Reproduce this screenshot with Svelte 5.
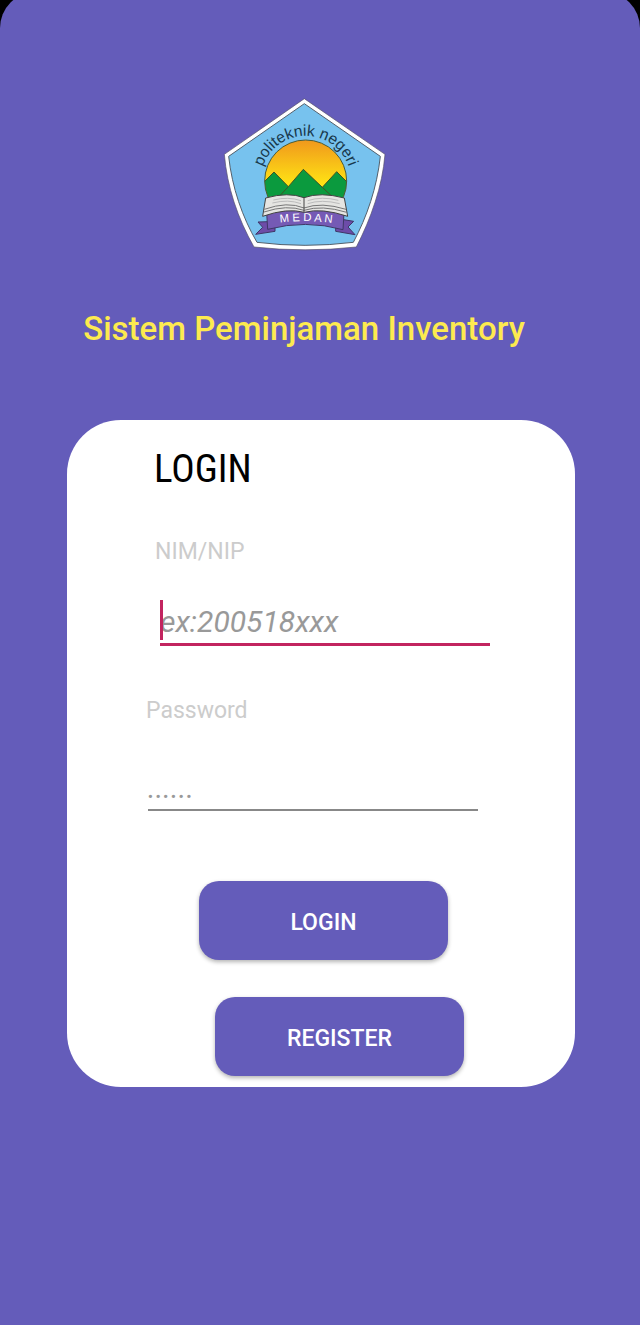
<script>
  let nim = $state('');
  let password = $state('');
</script>

<main class="page">
  <svg class="logo" viewBox="0 0 540 510" role="img" aria-label="Politeknik Negeri Medan">
    <defs>
      <linearGradient id="sun" x1="0" y1="0" x2="0" y2="1">
        <stop offset="0" stop-color="#f0981c" />
        <stop offset="0.55" stop-color="#ffe414" />
      </linearGradient>
      <clipPath id="disc"><circle cx="272" cy="273" r="123" /></clipPath>
      <path id="arc" d="M139 245 A136 136 0 0 1 405 245" />
      <path id="ribbonLine" d="M172 401 Q272 385 374 403" />
    </defs>
    <path d="M268 26 L510 193 C502 290 468 385 424 471 Q270 488 117 471 C68 385 36 290 28 193 Z" fill="#fff" stroke="#555068" stroke-width="2" stroke-linejoin="round" />
    <path d="M268 41 L496 199 C486 292 456 380 415 457 Q270 475 126 457 C82 382 51 292 41 199 Z" fill="#77c2ee" stroke="#53606c" stroke-width="3" />
    <g clip-path="url(#disc)">
      <circle cx="272" cy="273" r="123" fill="url(#sun)" />
      <path d="M135 288 L177 246 L220 290 L265 238 L322 292 L365 245 L410 290 V410 H135 Z" fill="#0b9a3e" stroke="#405327" stroke-width="3" />
      <path d="M190 322 L220 290 M354 322 L322 292" stroke="#405327" stroke-width="3" />
    </g>
    <circle cx="272" cy="273" r="123" fill="none" stroke="#4f5c31" stroke-width="3" />
    <path d="M160 395 L129 396 L143 412 L122 433 L180 424 L180 410 Z M380 388 L416 394 L399 411 L420 434 L362 424 L362 408 Z" fill="#6d4ca8" stroke="#3f3767" stroke-width="3" />
    <path d="M155 368 Q272 350 387 368 L384 419 Q272 388 158 418 Z" fill="#755ab5" stroke="#3f3767" stroke-width="3" />
    <path d="M152 324 Q220 305 267 323 Q316 305 388 324 L398 379 Q320 353 268 367 Q216 353 143 379 Z" fill="#e5e5e2" stroke="#424242" stroke-width="3" />
    <path d="M148 358 Q218 333 267 354 Q318 335 393 358 M147 366 Q216 343 267 361 Q320 344 395 367" fill="none" stroke="#777" stroke-width="3" />
    <path d="M175 330 Q220 319 258 332 M172 339 Q220 327 258 341 M278 332 Q320 318 370 331 M278 341 Q320 327 374 341" fill="none" stroke="#bbb" stroke-width="3" />
    <path d="M267 323 V367" stroke="#424242" stroke-width="3" />
    <text class="motto"><textPath href="#arc" startOffset="50%" text-anchor="middle">politeknik negeri</textPath></text>
    <text class="city"><textPath href="#ribbonLine" startOffset="50%" text-anchor="middle">M E D A N</textPath></text>
  </svg>

  <h1>Sistem Peminjaman Inventory</h1>

  <form class="card" onsubmit={(event) => event.preventDefault()}>
    <h2>LOGIN</h2>
    <label class="nim-label" for="nim">NIM/NIP</label>
    <div class="field nim">
      <input id="nim" type="text" placeholder="ex:200518xxx" bind:value={nim} />
      <span class="caret"></span>
    </div>
    <label class="password-label" for="password">Password</label>
    <div class="field password">
      <input id="password" type="password" placeholder="......" bind:value={password} />
    </div>
    <button class="login" type="submit">LOGIN</button>
    <button class="register" type="button">REGISTER</button>
  </form>
</main>

<style>
  :global(body) {
    margin: 0;
    background: #000;
  }

  .page {
    position: relative;
    box-sizing: border-box;
    min-height: 100vh;
    overflow: hidden;
    padding: 90px 0 40px;
    display: flex;
    flex-direction: column;
    font-family: Roboto, sans-serif;
  }

  .page::before {
    content: '';
    position: absolute;
    inset: -8px 0 0;
    z-index: -1;
    border-radius: 36px 36px 0 0;
    background: #645cba;
  }

  .logo {
    width: 180px;
    height: 170px;
    align-self: center;
    margin-right: 30px;
  }

  .motto {
    font: 47px 'Liberation Sans', sans-serif;
    fill: #17384c;
  }

  .city {
    font: 34px 'Liberation Sans', sans-serif;
    fill: #fff;
  }

  h1 {
    margin: 49px 32px 0 0;
    text-align: center;
    font-size: 33px;
    line-height: 40px;
    font-weight: 500;
    color: #fdea4f;
  }

  .card {
    display: flex;
    flex-direction: column;
    align-items: flex-start;
    margin: 71px 65px 0 67px;
    padding: 25px 0 11px;
    border-radius: 54px;
    background: #fff;
  }

  h2 {
    margin: 0 0 0 87px;
    font-family: 'Roboto Condensed', Roboto, sans-serif;
    font-size: 39px;
    line-height: 48px;
    font-weight: 400;
    color: #000;
  }

  label {
    font-size: 23px;
    line-height: 28px;
    color: #ccc;
  }

  .nim-label {
    margin: 45px 0 0 88px;
  }

  .password-label {
    margin: 51px 0 0 79px;
  }

  .field {
    position: relative;
    width: 65%;
  }

  .nim {
    margin: 34px 0 0 93px;
  }

  .password {
    margin: 40px 0 0 81px;
  }

  input {
    display: block;
    box-sizing: border-box;
    width: 100%;
    height: 46px;
    padding: 0;
    border: 0;
    border-bottom: 3px solid #c2245f;
    outline: 0;
    background: transparent;
    font: italic 30px Roboto, sans-serif;
    color: #222;
  }

  .password input {
    border-bottom: 2px solid #888;
  }

  input::placeholder {
    color: #999;
    opacity: 1;
  }

  .caret {
    position: absolute;
    left: 0;
    top: 0;
    width: 3px;
    height: 40px;
    background: #c2245f;
  }

  button {
    width: 49%;
    height: 79px;
    padding: 3px 0 0;
    border: 0;
    border-radius: 20px;
    background: #645cba;
    box-shadow: 0 2px 4px rgba(0, 0, 0, 0.3);
    font: 500 23px Roboto, sans-serif;
    color: #fff;
  }

  .login {
    margin: 70px 0 0 132px;
  }

  .register {
    margin: 37px 0 0 148px;
  }
</style>
